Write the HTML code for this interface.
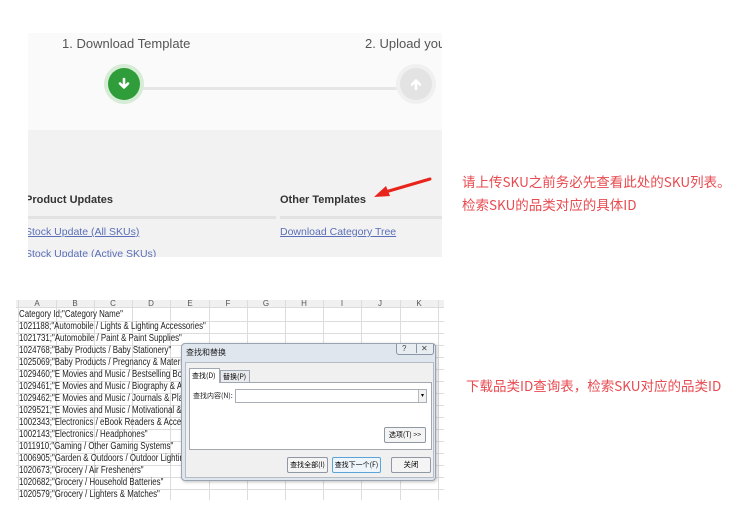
<!DOCTYPE html>
<html><head><meta charset="utf-8"><style>
*{margin:0;padding:0;box-sizing:border-box}
body{width:743px;height:505px;background:#fff;position:relative;overflow:hidden;font-family:"Liberation Sans","Noto Sans CJK SC",sans-serif}
.a{position:absolute}
.red{color:#e84a4f;font-size:13.5px;font-family:"Noto Sans CJK SC",sans-serif;white-space:nowrap}
.cjk{font-family:"Noto Sans CJK SC",sans-serif;white-space:nowrap}
</style></head><body>
<div class="a" style="left:28px;top:33px;width:414px;height:224px;background:#f2f2f2;overflow:hidden">
 <div class="a" style="left:0;top:0;width:414px;height:97px;background:#fafafa"></div>
 <div class="a" style="left:34px;top:3px;font-size:13px;color:#555">1. Download Template</div>
 <div class="a" style="left:337px;top:3px;font-size:13px;color:#555;white-space:nowrap">2. Upload you</div>
 <div class="a" style="left:115px;top:54px;width:260px;height:3px;background:#e6e6e6"></div>
 <div class="a" style="left:76px;top:31px;width:40px;height:40px;border-radius:50%;background:#d6ecd6"></div>
 <div class="a" style="left:80px;top:35px;width:32px;height:32px;border-radius:50%;background:#2f9e3a"></div>
 <svg class="a" style="left:88px;top:43px" width="16" height="16" viewBox="0 0 16 16"><path d="M8 3v8M4 7.5l4 4 4-4" stroke="#fff" stroke-width="2.6" fill="none" stroke-linecap="round" stroke-linejoin="round"/></svg>
 <div class="a" style="left:368px;top:31px;width:40px;height:40px;border-radius:50%;background:#f0f0f0"></div>
 <div class="a" style="left:372px;top:35px;width:32px;height:32px;border-radius:50%;background:#e3e3e3"></div>
 <svg class="a" style="left:380px;top:43px" width="16" height="16" viewBox="0 0 16 16"><path d="M8 13V5M4 8.5l4-4 4 4" stroke="#fff" stroke-width="2.6" fill="none" stroke-linecap="round" stroke-linejoin="round"/></svg>
 <div class="a" style="left:-3px;top:161px;font-size:11px;font-weight:bold;color:#333">Product Updates</div>
 <div class="a" style="left:252px;top:161px;font-size:11px;font-weight:bold;color:#333">Other Templates</div>
 <div class="a" style="left:0;top:183px;width:248px;height:3px;background:#e2e2e2"></div>
 <div class="a" style="left:252px;top:183px;width:162px;height:3px;background:#e2e2e2"></div>
 <div class="a" style="left:-3px;top:193px;font-size:10.5px;color:#5a6fb8;text-decoration:underline">Stock Update (All SKUs)</div>
 <div class="a" style="left:252px;top:193px;font-size:10.5px;color:#5a6fb8;text-decoration:underline">Download Category Tree</div>
 <div class="a" style="left:-3px;top:215px;font-size:10.5px;color:#5a6fb8;text-decoration:underline">Stock Update (Active SKUs)</div>
</div>
<svg class="a" style="left:370px;top:175px" width="65" height="25" viewBox="0 0 65 25"><path d="M60 4L12 18" stroke="#e8241c" stroke-width="3" stroke-linecap="round"/><path d="M4 22L16 11L20 21Z" fill="#e8241c"/></svg>
<div class="a red" style="left:462px;top:171px">请上传SKU之前务必先查看此处的SKU列表。</div>
<div class="a red" style="left:462px;top:194px">检索SKU的品类对应的具体ID</div>
<div class="a red" style="left:466px;top:375px">下载品类ID查询表，检索SKU对应的品类ID</div>

<div class="a" style="left:16px;top:300px;width:428px;height:200px;background:#fff;overflow:hidden">
 <svg class="a" style="left:0;top:0" width="428" height="200">
  <rect x="0" y="0" width="428" height="7" fill="#f0f0f0"/>
  <g stroke="#dcdcdc" stroke-width="1">
   <line x1="2.5" y1="0" x2="2.5" y2="200"/>
   <line x1="40.5" y1="0" x2="40.5" y2="200"/><line x1="78.5" y1="0" x2="78.5" y2="200"/><line x1="116.5" y1="0" x2="116.5" y2="200"/><line x1="154.5" y1="0" x2="154.5" y2="200"/><line x1="193.5" y1="0" x2="193.5" y2="200"/><line x1="231.5" y1="0" x2="231.5" y2="200"/><line x1="269.5" y1="0" x2="269.5" y2="200"/><line x1="307.5" y1="0" x2="307.5" y2="200"/><line x1="345.5" y1="0" x2="345.5" y2="200"/><line x1="384.5" y1="0" x2="384.5" y2="200"/><line x1="422.5" y1="0" x2="422.5" y2="200"/>
   <line x1="0" y1="7.5" x2="428" y2="7.5"/><line x1="0" y1="21.5" x2="428" y2="21.5"/><line x1="0" y1="33.5" x2="428" y2="33.5"/><line x1="0" y1="45.5" x2="428" y2="45.5"/><line x1="0" y1="57.5" x2="428" y2="57.5"/><line x1="0" y1="69.5" x2="428" y2="69.5"/><line x1="0" y1="81.5" x2="428" y2="81.5"/><line x1="0" y1="93.5" x2="428" y2="93.5"/><line x1="0" y1="105.5" x2="428" y2="105.5"/><line x1="0" y1="117.5" x2="428" y2="117.5"/><line x1="0" y1="129.5" x2="428" y2="129.5"/><line x1="0" y1="141.5" x2="428" y2="141.5"/><line x1="0" y1="153.5" x2="428" y2="153.5"/><line x1="0" y1="165.5" x2="428" y2="165.5"/><line x1="0" y1="177.5" x2="428" y2="177.5"/><line x1="0" y1="189.5" x2="428" y2="189.5"/>
  </g>
  <g font-size="8" fill="#555" font-family="Liberation Sans" text-anchor="middle">
   <text x="21" y="6">A</text><text x="59" y="6">B</text><text x="97" y="6">C</text><text x="135" y="6">D</text><text x="174" y="6">E</text><text x="212" y="6">F</text><text x="250" y="6">G</text><text x="288" y="6">H</text><text x="326" y="6">I</text><text x="364" y="6">J</text><text x="403" y="6">K</text>
  </g>
 </svg>
 <div style="position:absolute;left:3px;top:9px;line-height:12px;transform:scaleX(0.79);transform-origin:0 0">
  <div style="font-size:10px;color:#222;white-space:nowrap">Category Id;"Category Name"<br>1021188;"Automobile / Lights &amp; Lighting Accessories"<br>1021731;"Automobile / Paint &amp; Paint Supplies"<br>1024768;"Baby Products / Baby Stationery"<br>1025069;"Baby Products / Pregnancy &amp; Maternity"<br>1029460;"E Movies and Music / Bestselling Books"<br>1029461;"E Movies and Music / Biography &amp; Autob"<br>1029462;"E Movies and Music / Journals &amp; Planners"<br>1029521;"E Movies and Music / Motivational &amp; Self"<br>1002343;"Electronics / eBook Readers &amp; Accessories"<br>1002143;"Electronics / Headphones"<br>1011910;"Gaming / Other Gaming Systems"<br>1006905;"Garden &amp; Outdoors / Outdoor Lighting"<br>1020673;"Grocery / Air Fresheners"<br>1020682;"Grocery / Household Batteries"<br>1020579;"Grocery / Lighters &amp; Matches"</div>
 </div>
</div>

<div class="a" style="left:181px;top:343px;width:255px;height:138px;background:#dfe6ee;border:1px solid #9aa4b0;border-radius:4px;box-shadow:1px 1px 3px rgba(0,0,0,.25)">
 <div class="a cjk" style="left:4px;top:3px;font-size:8px;color:#222">查找和替换</div>
 <div class="a" style="left:214px;top:0;width:38px;height:11px;border:1px solid #8a96a4;border-top:none;border-radius:0 0 3px 3px;background:#e8edf2;font-size:8px;color:#444">
  <span class="a" style="left:5px;top:0">?</span><span class="a" style="left:19px;top:0;border-left:1px solid #8a96a4;padding-left:4px">✕</span></div>
 <div class="a" style="left:3px;top:18px;width:249px;height:116px;background:#f0f0f0;border:1px solid #b5bcc5"></div>
 <div class="a cjk" style="left:7px;top:24px;width:31px;height:15px;background:#fff;border:1px solid #a0a8b2;border-bottom:none;font-size:7px;padding:2px 0 0 2px;z-index:2">查找(D)</div>
 <div class="a cjk" style="left:38px;top:26px;width:30px;height:12px;background:#e9ebee;border:1px solid #a0a8b2;border-bottom:none;font-size:7px;padding:1px 0 0 2px">替换(P)</div>
 <div class="a" style="left:7px;top:38px;width:243px;height:68px;background:#fff;border:1px solid #a0a8b2"></div>
 <div class="a cjk" style="left:11px;top:47px;font-size:7px;color:#222">查找内容(N):</div>
 <div class="a" style="left:53px;top:45px;width:192px;height:14px;border:1px solid #a8aeb6;background:#fff"></div>
 <div class="a" style="left:236px;top:46px;width:8px;height:12px;border-left:1px solid #bbb;background:#f2f2f2;font-size:6px;text-align:center;line-height:12px">▾</div>
 <div class="a cjk" style="left:202px;top:83px;width:42px;height:16px;border:1px solid #8f98a3;border-radius:2px;background:#f4f4f4;font-size:7px;text-align:center;line-height:14px">选项(T) &gt;&gt;</div>
 <div class="a cjk" style="left:105px;top:113px;width:41px;height:16px;border:1px solid #8f98a3;border-radius:2px;background:#f4f4f4;font-size:7px;text-align:center;line-height:14px">查找全部(I)</div>
 <div class="a cjk" style="left:150px;top:113px;width:49px;height:16px;border:1px solid #5aa4d8;border-radius:2px;background:#eef5fb;font-size:7px;text-align:center;line-height:14px">查找下一个(F)</div>
 <div class="a cjk" style="left:209px;top:113px;width:40px;height:16px;border:1px solid #8f98a3;border-radius:2px;background:#f4f4f4;font-size:7.5px;text-align:center;line-height:14px">关闭</div>
</div>
</body></html>
